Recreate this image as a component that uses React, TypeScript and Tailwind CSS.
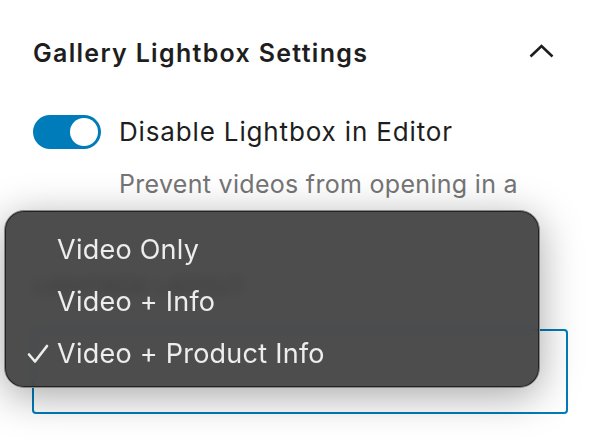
import React from "react";

export default function App() {
  return (
    <div className="relative w-[600px] h-[445px] overflow-hidden bg-white font-['Inter',sans-serif]">
      <div className="pl-[33px] pr-[32px] pt-[37px]">
        <div className="flex items-center justify-between h-[32px]">
          <h2 className="text-[25px] leading-[32px] font-semibold text-[#1e1e1e] tracking-[1.3px]">
            Gallery Lightbox Settings
          </h2>
          <svg width="25" height="14" viewBox="0 0 25 14" className="mr-[14px] mt-[-4px]" fill="none">
            <path d="M1.5 12.5 L12.5 2 L23.5 12.5" stroke="#1e1e1e" strokeWidth="2.6" />
          </svg>
        </div>

        <div className="mt-[46px] flex items-center gap-[18px]">
          <div className="w-[68px] h-[34px] rounded-full bg-[#007cba] flex items-center justify-end pr-[3px]">
            <div className="w-[28px] h-[28px] rounded-full bg-white" />
          </div>
          <span className="text-[26px] leading-[34px] text-[#1e1e1e] tracking-[0.85px]">
            Disable Lightbox in Editor
          </span>
        </div>

        <p className="mt-[19px] ml-[86px] text-[25px] leading-[32px] text-[#757575] tracking-[0.3px]">
          Prevent videos from opening in a
        </p>

        <div className="mt-[72px] text-[22px] leading-[28px] font-medium text-[#1e1e1e] uppercase tracking-[0.5px]">
          Lightbox Layout
        </div>

        <div className="mt-[29px] -ml-[1px] w-[536px] h-[85px] rounded-[4px] border-2 border-[#007cba]" />
      </div>

      <div className="absolute left-[4px] top-[210px] w-[536px] h-[178px] rounded-[20px] bg-[#3f3f3f]/[0.93] backdrop-blur-[6px] border border-[#8a8a8a] shadow-[0_8px_40px_rgba(0,0,0,0.35),inset_0_0_0_1px_rgba(0,0,0,0.55)] flex flex-col pt-[13px]">
        <div className="h-[52px] flex items-center pl-[52px] text-[27px] text-[#ededed] tracking-[0.25px]">
          Video Only
        </div>
        <div className="h-[52px] flex items-center pl-[52px] text-[27px] text-[#ededed] tracking-[0.25px]">
          Video + Info
        </div>
        <div className="h-[52px] flex items-center text-[27px] text-[#ededed] tracking-[0.25px]">
          <span className="w-[52px] pl-[22px] flex items-center">
            <svg width="22" height="20" viewBox="0 0 22 20" fill="none">
              <path d="M2 10.5 L8 17.5 L20 2" stroke="#ededed" strokeWidth="2.6" strokeLinecap="round" strokeLinejoin="round" />
            </svg>
          </span>
          <span>Video + Product Info</span>
        </div>
      </div>
    </div>
  );
}
